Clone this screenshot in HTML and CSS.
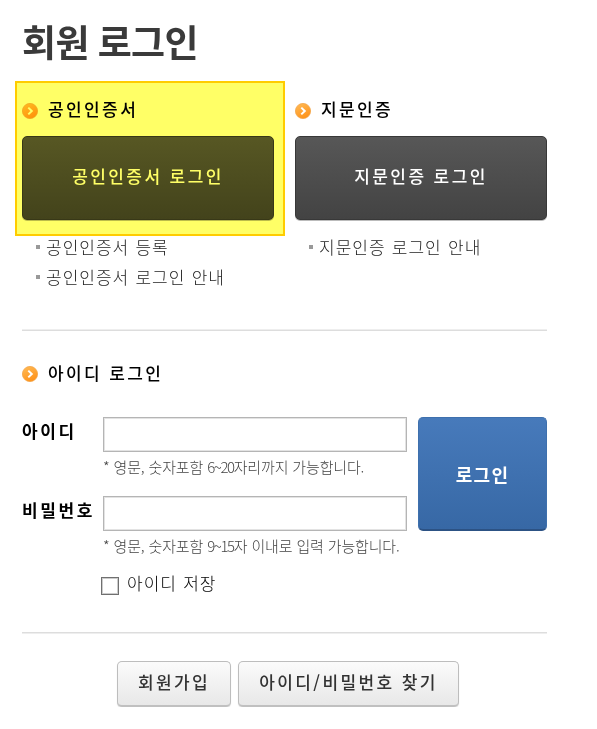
FILE: index.html
```
<!DOCTYPE html>
<html lang="ko">

<head>
    <meta charset="UTF-8">
    <title>회원 로그인</title>
    <link rel="stylesheet" href="styles.css">
</head>

<body>
    <!-- shared bullet icon -->
    <svg class="defs" width="0" height="0">
        <defs>
            <linearGradient id="orange" x1="0" y1="0" x2="0.5" y2="1">
                <stop offset="0" stop-color="#ffbc58" />
                <stop offset="1" stop-color="#ff941c" />
            </linearGradient>
        </defs>
        <symbol id="arrow" viewBox="0 0 16 16">
            <circle cx="8" cy="8" r="7.6" fill="url(#orange)" stroke="#f3a548" stroke-width="0.8" />
            <path d="M6.3 4.6 L9.8 8 L6.3 11.4" fill="none" stroke="#fff" stroke-width="2" />
        </symbol>
    </svg>

    <main class="login">
        <h1 class="title">회원 로그인</h1>

        <section class="methods">
            <div class="method">
                <div class="method-main highlight">
                    <h2 class="heading"><svg class="icon"><use href="#arrow" /></svg>공인인증서</h2>
                    <button class="btn-dark">공인인증서 로그인</button>
                </div>
                <ul class="links">
                    <li>공인인증서 등록</li>
                    <li>공인인증서 로그인 안내</li>
                </ul>
            </div>
            <div class="method">
                <div class="method-main">
                    <h2 class="heading"><svg class="icon"><use href="#arrow" /></svg>지문인증</h2>
                    <button class="btn-dark">지문인증 로그인</button>
                </div>
                <ul class="links">
                    <li>지문인증 로그인 안내</li>
                </ul>
            </div>
        </section>

        <section class="id-login">
            <h2 class="heading"><svg class="icon"><use href="#arrow" /></svg>아이디 로그인</h2>
            <form class="form">
                <div class="fields">
                    <label class="label" for="user-id">아이디</label>
                    <div class="field">
                        <input class="input" type="text" id="user-id">
                        <p class="hint">* 영문, 숫자포함 <span class="num">6~20</span>자리까지 가능합니다.</p>
                    </div>
                    <label class="label" for="user-pw">비밀번호</label>
                    <div class="field">
                        <input class="input" type="password" id="user-pw">
                        <p class="hint">* 영문, 숫자포함 <span class="num">9~15</span>자 이내로 입력 가능합니다.</p>
                    </div>
                </div>
                <button class="btn-login" type="button">로그인</button>
            </form>
            <label class="save"><input class="check" type="checkbox">아이디 저장</label>
        </section>

        <section class="bottom">
            <button class="btn-light join">회원가입</button>
            <button class="btn-light find">아이디/비밀번호 찾기</button>
        </section>
    </main>
</body>

</html>
```
FILE: styles.css
```
*,
*::before,
*::after {
    margin: 0;
    padding: 0;
    box-sizing: border-box;
}

body {
    background-color: #fff;
    color: #000;
    font-family: "Noto Sans CJK KR", sans-serif;
    font-size: 17px;
}

button,
input {
    font-family: inherit;
    font-size: inherit;
}

.defs {
    display: block;
}

.login {
    width: 547px;
    padding: 17px 0 0 22px;
}

.title {
    height: 64px;
    line-height: 48px;
    font-size: 37px;
    font-weight: 700;
    letter-spacing: -0.6px;
    word-spacing: -1px;
    color: #3a3a3a;
}

.methods {
    display: grid;
    grid-template-columns: 252px 252px;
    column-gap: 21px;
    height: 250px;
    border-bottom: 1px solid #ddd;
    box-shadow: 0 -1px 0 #eee inset;
}

.method-main {
    position: relative;
    height: 151px;
    padding-top: 16px;
}

/* marker drawn over the certificate login */
.highlight::after {
    content: "";
    position: absolute;
    top: 0;
    left: -7px;
    width: 270px;
    height: 155px;
    border: 2px solid #fc0;
    background-color: #ff6;
    mix-blend-mode: multiply;
    pointer-events: none;
}

.heading {
    display: flex;
    align-items: center;
    height: 24px;
    font-size: 17px;
    font-weight: 500;
    letter-spacing: 2.4px;
    line-height: 22px;
}

.icon {
    width: 16px;
    height: 16px;
    margin: 4px 10px 0 0;
}

.id-login .icon {
    margin-top: 2px;
}

.btn-dark {
    display: block;
    width: 252px;
    height: 84px;
    margin-top: 15px;
    padding-bottom: 5px;
    border: 1px solid #383838;
    border-radius: 5px;
    background-image: linear-gradient(#575757, #434343);
    box-shadow: 0 1px 0 #bbb;
    color: #fff;
    font-weight: 500;
    letter-spacing: 2.4px;
}

.links {
    list-style: none;
    padding-left: 14px;
}

.links li {
    display: flex;
    align-items: center;
    height: 30px;
    padding-bottom: 1px;
    color: #222;
    font-weight: 300;
    letter-spacing: 1px;
    word-spacing: 0.5px;
}

.links li::before {
    content: "";
    width: 4px;
    height: 4px;
    margin: 1px 6px 0 0;
    background-color: #999;
}

.id-login {
    height: 302px;
    padding-top: 30px;
    border-bottom: 1px solid #ddd;
    box-shadow: 0 1px 0 #eee;
}

.form {
    display: flex;
    justify-content: space-between;
    margin-top: 32px;
}

.fields {
    display: grid;
    grid-template-columns: 81px 304px;
    grid-auto-rows: 79px;
}

.label {
    line-height: 28px;
    font-weight: 700;
    letter-spacing: 2.6px;
}

.input {
    display: block;
    width: 304px;
    height: 35px;
    border: 1px solid #b5b5b5;
    box-shadow: inset 0 0 0 1px #e3e3e3;
}

.hint {
    height: 30px;
    line-height: 29px;
    font-size: 15px;
    font-weight: 300;
    letter-spacing: -0.15px;
    color: #444;
    white-space: nowrap;
}

.num {
    letter-spacing: -1.4px;
}

.btn-login {
    width: 129px;
    height: 114px;
    border: 1px solid #3e70ad;
    border-bottom: 2px solid #2c5284;
    border-radius: 5px;
    background-image: linear-gradient(#477abb, #3768a5);
    color: #fff;
    font-size: 18px;
    font-weight: 700;
    letter-spacing: 1.3px;
}

.save {
    display: flex;
    align-items: center;
    height: 22px;
    margin: -4px 0 0 79px;
    font-weight: 300;
    letter-spacing: 1px;
    word-spacing: 0.5px;
}

.check {
    appearance: none;
    width: 18px;
    height: 18px;
    margin: 7px 8px 0 0;
    border: 1px solid #707070;
    box-shadow: inset 0 0 0 1px #ccc;
}

.bottom {
    display: flex;
    gap: 7px;
    padding: 28px 0 0 95px;
}

.btn-light {
    height: 46px;
    padding-bottom: 4px;
    border: 1px solid #bdbdbd;
    border-bottom: 2px solid #c0c0c0;
    border-radius: 5px;
    background-image: linear-gradient(#fbfbfb, #e8e8e8);
    box-shadow: 0 1px 1px #ddd;
    color: #333;
    font-weight: 500;
    letter-spacing: 2.4px;
}

.join {
    width: 114px;
}

.find {
    width: 221px;
}
```
